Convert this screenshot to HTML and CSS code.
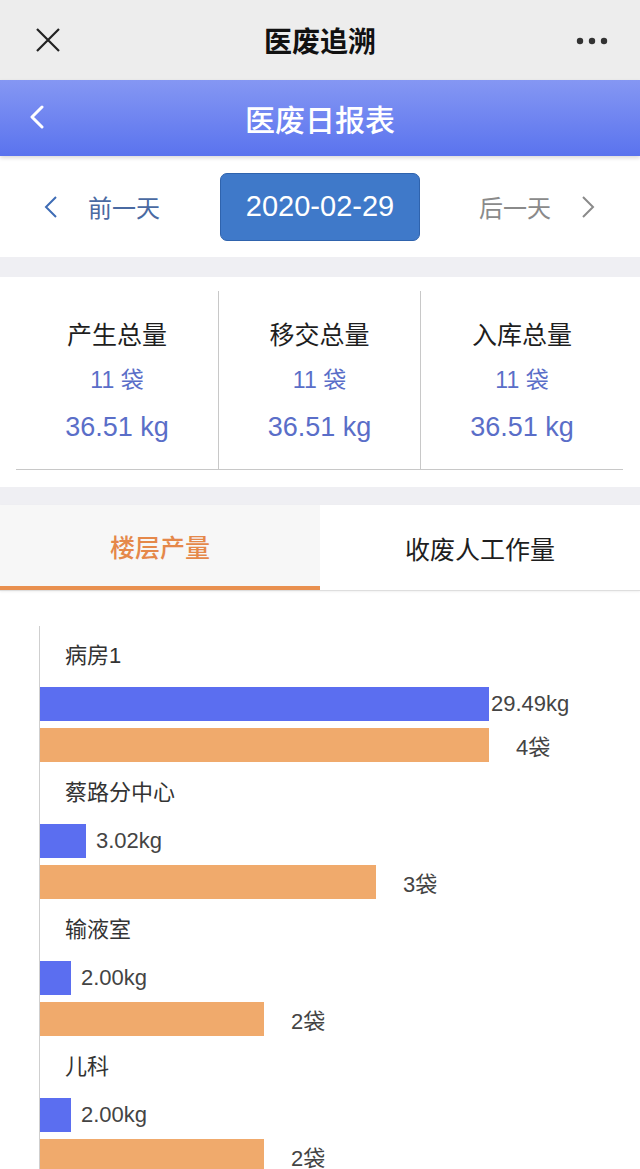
FILE: index.html
```html
<!DOCTYPE html>
<html lang="zh-CN">
<head>
  <meta charset="UTF-8" />
  <meta name="viewport" content="width=device-width, initial-scale=1.0"/>
  <title>医废日报表</title>
  <link rel="stylesheet" href="styles.css">
</head>
<body>

  <div class="topbar">
    <div class="topbar-left">
      <svg width="26" height="26" viewBox="0 0 26 26"><path d="M2 2 L24 24 M24 2 L2 24" stroke="#222" stroke-width="2.2" fill="none"/></svg>
    </div>
    <div class="topbar-title">医废追溯</div>
    <div class="topbar-right">
      <svg width="32" height="8" viewBox="0 0 32 8"><circle cx="4" cy="4" r="3.2" fill="#333"/><circle cx="16" cy="4" r="3.2" fill="#333"/><circle cx="28" cy="4" r="3.2" fill="#333"/></svg>
    </div>
  </div>

  <div class="header">
    <div class="header-back">
      <svg width="18" height="24" viewBox="0 0 18 24"><path d="M14 2 L4 12 L14 22" stroke="#fff" stroke-width="3" fill="none" stroke-linecap="round" stroke-linejoin="round"/></svg>
    </div>
    <div class="header-title">医废日报表</div>
    <div></div>
  </div>

  <div class="datenav">
    <div class="nav-prev">
      <svg width="14" height="22" viewBox="0 0 14 22"><path d="M12 1 L2 11 L12 21" stroke="#3e6cb5" stroke-width="2" fill="none"/></svg>
      <span>前一天</span>
    </div>
    <div class="date-btn">2020-02-29</div>
    <div class="nav-next">
      <span>后一天</span>
      <svg width="14" height="22" viewBox="0 0 14 22"><path d="M2 1 L12 11 L2 21" stroke="#8a8a8a" stroke-width="2" fill="none"/></svg>
    </div>
  </div>

  <div class="band"></div>

  <div class="stats">
    <div class="stats-grid">
      <div class="stat">
        <div class="stat-title">产生总量</div>
        <div class="stat-count">11 袋</div>
        <div class="stat-weight">36.51 kg</div>
      </div>
      <div class="stat">
        <div class="stat-title">移交总量</div>
        <div class="stat-count">11 袋</div>
        <div class="stat-weight">36.51 kg</div>
      </div>
      <div class="stat">
        <div class="stat-title">入库总量</div>
        <div class="stat-count">11 袋</div>
        <div class="stat-weight">36.51 kg</div>
      </div>
    </div>
  </div>

  <div class="band band-short"></div>

  <div class="tabs">
    <div class="tab active">楼层产量</div>
    <div class="tab">收废人工作量</div>
  </div>

  <div class="chart">
    <div class="group">
      <div class="group-label">病房1</div>
      <div class="bar-row">
        <div class="bar bar-kg" style="width: 449px"></div>
        <span class="bar-value tight">29.49kg</span>
      </div>
      <div class="bar-row">
        <div class="bar bar-bag" style="width: 449px"></div>
        <span class="bar-value bag">4袋</span>
      </div>
    </div>
    <div class="group">
      <div class="group-label">蔡路分中心</div>
      <div class="bar-row">
        <div class="bar bar-kg" style="width: 46px"></div>
        <span class="bar-value">3.02kg</span>
      </div>
      <div class="bar-row">
        <div class="bar bar-bag" style="width: 336px"></div>
        <span class="bar-value bag">3袋</span>
      </div>
    </div>
    <div class="group">
      <div class="group-label">输液室</div>
      <div class="bar-row">
        <div class="bar bar-kg" style="width: 31px"></div>
        <span class="bar-value">2.00kg</span>
      </div>
      <div class="bar-row">
        <div class="bar bar-bag" style="width: 224px"></div>
        <span class="bar-value bag">2袋</span>
      </div>
    </div>
    <div class="group">
      <div class="group-label">儿科</div>
      <div class="bar-row">
        <div class="bar bar-kg" style="width: 31px"></div>
        <span class="bar-value">2.00kg</span>
      </div>
      <div class="bar-row">
        <div class="bar bar-bag" style="width: 224px"></div>
        <span class="bar-value bag">2袋</span>
      </div>
    </div>
  </div>

</body>
</html>
```

FILE: styles.css
```css
body {
  margin: 0;
  font-family: 'Liberation Sans', 'Noto Sans CJK SC', sans-serif;
  background-color: #fff;
  color: #333;
}
.topbar {
  height: 80px;
  background: #ededed;
  display: grid;
  grid-template-columns: 1fr auto 1fr;
  align-items: center;
}
.topbar-left {
  padding-left: 35px;
  padding-top: 4px;
}
.topbar-title {
  font-size: 28px;
  font-weight: bold;
  color: #111;
}
.topbar-right {
  justify-self: end;
  padding-right: 32px;
}
.header {
  height: 76px;
  background: linear-gradient(to bottom, #8597f3, #5a73ee);
  display: grid;
  grid-template-columns: 1fr auto 1fr;
  align-items: center;
  box-shadow: 0 2px 4px rgba(0,0,0,0.15);
  position: relative;
}
.header-back {
  padding-left: 28px;
  padding-top: 2px;
}
.header-title {
  font-size: 30px;
  color: #fff;
  font-weight: 500;
}
.datenav {
  height: 101px;
  display: grid;
  grid-template-columns: 1fr auto 1fr;
  align-items: center;
}
.nav-prev, .nav-next {
  display: flex;
  align-items: center;
  gap: 30px;
  font-size: 24px;
}
.nav-prev {
  padding-left: 44px;
  color: #4a6aa2;
}
.nav-next {
  justify-self: end;
  padding-right: 45px;
  color: #8a8a8a;
}
.date-btn {
  width: 200px;
  height: 68px;
  box-sizing: border-box;
  background: #3f79c9;
  border: 1px solid #2f63ad;
  border-radius: 7px;
  color: #fff;
  font-size: 29px;
  display: flex;
  align-items: center;
  justify-content: center;
}
.band {
  height: 20px;
  background: #efeff3;
}
.band-short {
  height: 18px;
}
.stats {
  padding: 14px 17px 17px 16px;
}
.stats-grid {
  display: grid;
  grid-template-columns: 202px 202px 1fr;
  border-bottom: 1px solid #c8c8c8;
}
.stat {
  height: 178px;
  box-sizing: border-box;
  padding-top: 22px;
  text-align: center;
}
.stat + .stat {
  border-left: 1px solid #c8c8c8;
}
.stat-title {
  font-size: 25px;
  line-height: 44px;
  color: #1e1e1e;
}
.stat-count {
  font-size: 23px;
  line-height: 46px;
  color: #5a6ec8;
}
.stat-weight {
  font-size: 27px;
  line-height: 48px;
  color: #5a6ec8;
}
.tabs {
  display: grid;
  grid-template-columns: 1fr 1fr;
  border-bottom: 1px solid #dedede;
  box-shadow: 0 1px 2px rgba(0,0,0,0.06);
}
.tab {
  height: 85px;
  display: flex;
  align-items: center;
  justify-content: center;
  font-size: 25px;
  color: #1e1e1e;
}
.tab.active {
  background: #f7f7f7;
  color: #e5884a;
  font-weight: 500;
  height: 81px;
  border-bottom: 4px solid #e9904f;
}
.chart {
  margin: 35px 0 0 39px;
  border-left: 1px solid #cfcfcf;
  padding-top: 15px;
}
.group {
  padding-bottom: 16px;
}
.group-label {
  font-size: 22px;
  line-height: 30px;
  padding-left: 25px;
  color: #333;
  margin-bottom: 16px;
}
.bar-row {
  display: flex;
  align-items: center;
  height: 34px;
}
.bar-row + .bar-row {
  margin-top: 7px;
}
.bar {
  height: 34px;
}
.bar-kg {
  background: #5b6ef0;
}
.bar-bag {
  background: #f0aa6c;
}
.bar-value {
  font-size: 22px;
  color: #444;
  margin-left: 10px;
}
.bar-value.tight {
  margin-left: 2px;
}
.bar-value.bag {
  margin-left: 27px;
}
```
